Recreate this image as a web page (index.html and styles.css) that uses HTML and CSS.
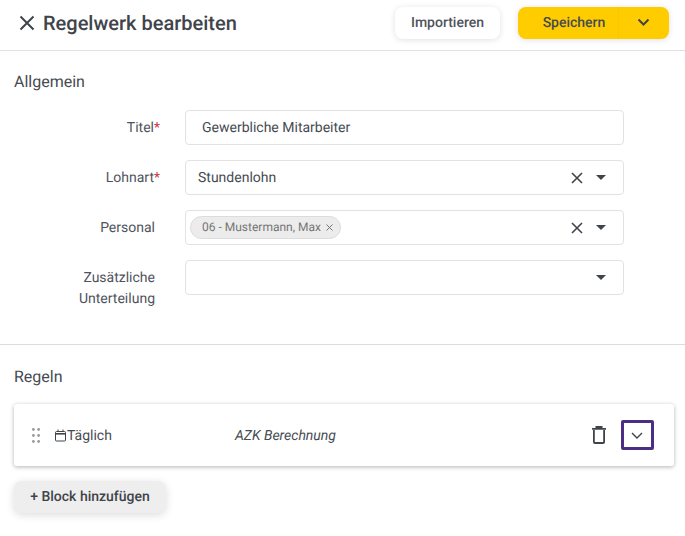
FILE: index.html
```html
<!DOCTYPE html>
<html lang="de">
<head>
  <meta charset="UTF-8" />
  <title>Regelwerk bearbeiten</title>
  <link rel="stylesheet" href="styles.css">
</head>
<body>
  <header class="topbar">
    <svg class="close-icon" width="16" height="16" viewBox="0 0 16 16"><path d="M1.5 1.5l13 13M14.5 1.5l-13 13"/></svg>
    <h1 class="title">Regelwerk bearbeiten</h1>
    <button class="btn-import">Importieren</button>
    <div class="btn-save">
      <span class="btn-save-label">Speichern</span>
      <span class="btn-save-arrow">
        <svg width="13" height="9" viewBox="0 0 13 9"><path d="M1.5 1.5l5 5 5-5"/></svg>
      </span>
    </div>
  </header>

  <section class="general">
    <h2 class="section-title">Allgemein</h2>
    <div class="form">
      <label class="field-label">Titel<span class="req">*</span></label>
      <div class="field field-title">Gewerbliche Mitarbeiter</div>

      <label class="field-label">Lohnart<span class="req">*</span></label>
      <div class="field">
        <span class="field-value">Stundenlohn</span>
        <svg class="clear" width="12" height="12" viewBox="0 0 12 12"><path d="M1 1l10 10M11 1L1 11"/></svg>
        <span class="caret"></span>
      </div>

      <label class="field-label field-label-pad">Personal</label>
      <div class="field">
        <span class="field-value">
          <span class="chip">06 - Mustermann, Max
            <svg width="7" height="7" viewBox="0 0 7 7"><path d="M.5.5l6 6M6.5.5l-6 6"/></svg>
          </span>
        </span>
        <svg class="clear" width="12" height="12" viewBox="0 0 12 12"><path d="M1 1l10 10M11 1L1 11"/></svg>
        <span class="caret"></span>
      </div>

      <label class="field-label field-label-pad">Zusätzliche Unterteilung</label>
      <div class="field">
        <span class="field-value"></span>
        <span class="caret"></span>
      </div>
    </div>
  </section>

  <section class="rules">
    <h2 class="section-title">Regeln</h2>
    <div class="rule-card">
      <svg class="drag" width="8" height="15" viewBox="0 0 8 15"><circle cx="1.4" cy="1.5" r="1.4"/><circle cx="6.6" cy="1.5" r="1.4"/><circle cx="1.4" cy="7.5" r="1.4"/><circle cx="6.6" cy="7.5" r="1.4"/><circle cx="1.4" cy="13.5" r="1.4"/><circle cx="6.6" cy="13.5" r="1.4"/></svg>
      <svg class="calendar" width="11" height="13" viewBox="0 0 11 13"><path d="M1.500 2.500h8a1 1 0 0 1 1 1v7.500a1 1 0 0 1-1 1h-8a1 1 0 0 1-1-1V3.500a1 1 0 0 1 1-1z"/><path class="calendar-bar" d="M.5 4.800h10"/><path d="M3 .5v2M8 .5v2"/></svg>
      <span class="rule-name">Täglich</span>
      <em class="rule-type">AZK Berechnung</em>
      <svg class="trash" width="14" height="18" viewBox="0 0 14 18"><path d="M1.900 4v12a1 1 0 0 0 1 1h8.200a1 1 0 0 0 1-1V4M0 2.800h14M3.500 1h7"/></svg>
      <button class="expand">
        <svg width="12" height="7" viewBox="0 0 12 7"><path d="M1 1l5 5 5-5"/></svg>
      </button>
    </div>
    <button class="btn-add">+ Block hinzufügen</button>
  </section>
</body>
</html>
```

FILE: styles.css
```css
* {
  box-sizing: border-box;
}
body {
  margin: 0;
  font-family: Roboto, Arial, sans-serif;
  font-size: 14px;
  color: #464b52;
  background-color: white;
  text-rendering: geometricPrecision;
}
button {
  font-family: inherit;
  text-rendering: inherit;
  border: none;
  cursor: pointer;
}
svg path {
  fill: none;
  stroke: #3f444b;
  stroke-width: 2;
}
.topbar {
  height: 51px;
  display: flex;
  align-items: center;
  padding: 0 16px 5px 19px;
  border-bottom: 1px solid #e0e0e8;
}
.close-icon {
  margin-right: 8px;
}
.title {
  margin: 0;
  flex: 1;
  font-size: 20px;
  font-weight: 500;
  color: #3f444b;
}
.btn-import {
  width: 105px;
  height: 32px;
  margin-right: 18px;
  background: white;
  border-radius: 8px;
  font-size: 14px;
  font-weight: 500;
  color: #4f545c;
  box-shadow: 0 1px 6px rgb(0 0 0 / 0.12);
}
.btn-save {
  width: 151px;
  height: 32px;
  display: flex;
  align-items: center;
  background: #ffcc00;
  border-radius: 8px;
  font-weight: 500;
  box-shadow: 0 1px 6px rgb(0 0 0 / 0.12);
}
.btn-save-label {
  width: 101px;
  height: 100%;
  padding-left: 12px;
  line-height: 32px;
  text-align: center;
  border-right: 1px solid #f8c700;
}
.btn-save-arrow {
  flex: 1;
  display: flex;
  justify-content: center;
  padding-right: 2px;
}
.general {
  height: 294px;
  padding: 0 14px;
  border-bottom: 1px solid #dcdcdc;
}
.section-title {
  margin: 0;
  font-size: 16px;
  font-weight: 400;
  line-height: 20px;
  color: #464b52;
}
.general .section-title {
  padding-top: 21px;
}
.form {
  display: grid;
  grid-template-columns: 146px 439px;
  column-gap: 25px;
  row-gap: 15px;
  margin-top: 18px;
}
.field-label {
  text-align: right;
  line-height: 21px;
  padding-top: 8px;
  color: #4f545c;
}
.field-label-pad {
  padding-right: 5px;
}
.req {
  color: #d32f2f;
}
.field {
  height: 35px;
  display: flex;
  align-items: center;
  padding: 0 17px 0 12px;
  border: 1px solid #e2e2e2;
  border-radius: 4px;
}
.field-title {
  padding-left: 16px;
}
.field-value {
  flex: 1;
}
.chip {
  display: inline-flex;
  align-items: center;
  gap: 5px;
  height: 23px;
  margin-left: -8px;
  padding: 0 7px 1px 11px;
  font-size: 12px;
  color: #757575;
  background: #ececec;
  border: 1px solid #dcdcdc;
  border-radius: 12px;
}
.chip svg path {
  stroke: #757575;
  stroke-width: 1;
}
.clear {
  margin-right: 13px;
}
.clear path {
  stroke-width: 1.6;
}
.caret {
  width: 0;
  height: 0;
  border-left: 5px solid transparent;
  border-right: 5px solid transparent;
  border-top: 5px solid #3f444b;
}
.rules {
  padding: 22px 11px 23px 14px;
}
.rule-card {
  height: 62px;
  margin-top: 17px;
  display: flex;
  align-items: center;
  padding: 0 20px 0 18px;
  background: white;
  border-radius: 3px;
  box-shadow: 0 1px 4px rgb(0 0 0 / 0.3);
}
.drag {
  fill: #9a9a9a;
  margin-right: 14px;
  margin-left: 0;
}
.calendar {
  margin-left: 1px;
}
.calendar path {
  stroke-width: 1;
}
.calendar .calendar-bar {
  stroke-width: 1.6;
}
.rule-name {
  width: 168px;
  margin-left: 1px;
  padding-top: 1px;
}
.rule-type {
  flex: 1;
  padding-top: 1px;
}
.trash {
  margin-right: 15px;
}
.trash path {
  stroke-width: 1.8;
}
.expand {
  width: 33px;
  height: 30px;
  display: flex;
  align-items: center;
  justify-content: center;
  padding: 0 1px 0 0;
  background: white;
  border: 3px solid #4b2e83;
  border-radius: 2px;
}
.expand path {
  stroke-width: 1.4;
}
.btn-add {
  display: block;
  width: 152px;
  height: 32px;
  margin-top: 15px;
  padding-bottom: 2px;
  font-size: 14px;
  font-weight: 500;
  color: #3f444b;
  background: #eeeeee;
  border-radius: 8px;
  box-shadow: 0 2px 8px rgb(0 0 0 / 0.14);
}
```
